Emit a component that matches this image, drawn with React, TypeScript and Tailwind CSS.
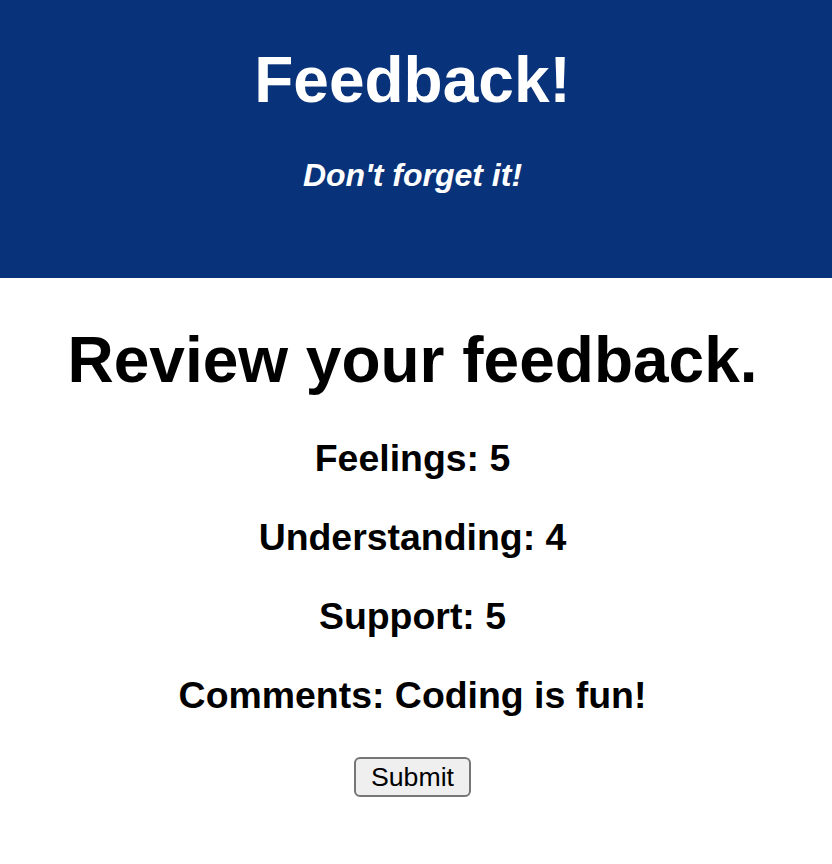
import React from "react";

const answers = [
  { label: "Feelings", value: "5" },
  { label: "Understanding", value: "4" },
  { label: "Support", value: "5" },
  { label: "Comments", value: "Coding is fun!" },
];

export default function App() {
  return (
    <div className="min-h-screen bg-white text-black font-['Liberation_Sans',Arial,sans-serif]">
      {/* header */}
      <header className="bg-[#08327a] text-white text-center pt-[43px] pb-[84px] pr-[7px]">
        <h1 className="text-[64px] leading-[74px] font-bold">Feedback!</h1>
        <h4 className="mt-[40px] text-[32px] leading-[37px] font-bold italic">Don't forget it!</h4>
      </header>

      {/* review */}
      <main className="flex flex-col items-center text-center pt-[45px] pr-[7px]">
        <h1 className="text-[64px] leading-[74px] font-bold">Review your feedback.</h1>
        <div className="mt-[40px] flex flex-col gap-[36px]">
          {answers.map((a) => (
            <h3 key={a.label} className="text-[37.44px] leading-[43px] font-bold">
              {a.label}: {a.value}
            </h3>
          ))}
        </div>
        <button className="mt-[40px] h-[40px] px-[15px] text-[26.67px] leading-[30px] bg-[#efefef] border-2 border-[#767676] rounded-[6px]">
          Submit
        </button>
      </main>
    </div>
  );
}
